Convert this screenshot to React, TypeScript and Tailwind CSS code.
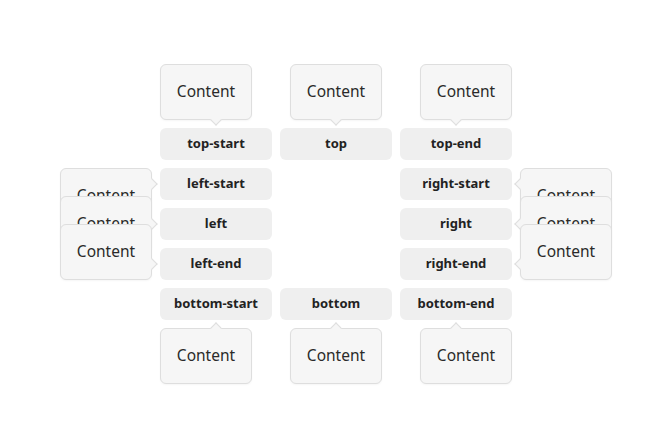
import React from "react";

type Side = "top" | "bottom" | "left" | "right";
type Align = "start" | "center" | "end";

interface Item {
  label: string;
  side: Side;
  align: Align;
}

const popoverPos: Record<string, string> = {
  "top-start": "bottom-[calc(100%+8px)] left-0",
  "top-center": "bottom-[calc(100%+8px)] left-1/2 -translate-x-1/2",
  "top-end": "bottom-[calc(100%+8px)] right-0",
  "bottom-start": "top-[calc(100%+8px)] left-0",
  "bottom-center": "top-[calc(100%+8px)] left-1/2 -translate-x-1/2",
  "bottom-end": "top-[calc(100%+8px)] right-0",
  "left-start": "right-[calc(100%+8px)] top-0",
  "left-center": "right-[calc(100%+8px)] top-1/2 -translate-y-1/2",
  "left-end": "right-[calc(100%+8px)] bottom-0",
  "right-start": "left-[calc(100%+8px)] top-0",
  "right-center": "left-[calc(100%+8px)] top-1/2 -translate-y-1/2",
  "right-end": "left-[calc(100%+8px)] bottom-0",
};

const arrowPos: Record<Side, string> = {
  top: "top-[-12px] left-[calc(50%-4px)] border-r border-b",
  bottom: "bottom-[-12px] left-[calc(50%-4px)] border-l border-t",
  left: "left-[-12px] top-[calc(50%-4px)] border-t border-r",
  right: "right-[-12px] top-[calc(50%-4px)] border-b border-l",
};

function Trigger({ item }: { item: Item }) {
  return (
    <div className="relative">
      <button className="w-[112px] h-8 pb-0.5 rounded-md bg-[#efefef] text-[13px] font-bold text-[#222] leading-none">
        {item.label}
      </button>
      <div
        className={
          "absolute w-[92px] h-14 pb-px flex items-center justify-center rounded-md border border-[#dedede] bg-[#f6f6f6] shadow-[0_1px_2px_rgba(0,0,0,0.04)] text-[15.5px] text-[#2a2a2a] " +
          popoverPos[`${item.side}-${item.align}`]
        }
      >
        Content
      </div>
      <div
        className={
          "absolute w-2 h-2 rotate-45 bg-[#f6f6f6] border-[#dedede] " +
          arrowPos[item.side]
        }
      />
    </div>
  );
}

const rows: (Item | null)[][] = [
  [
    { label: "top-start", side: "top", align: "start" },
    { label: "top", side: "top", align: "center" },
    { label: "top-end", side: "top", align: "end" },
  ],
  [
    { label: "left-start", side: "left", align: "start" },
    null,
    { label: "right-start", side: "right", align: "start" },
  ],
  [
    { label: "left", side: "left", align: "center" },
    null,
    { label: "right", side: "right", align: "center" },
  ],
  [
    { label: "left-end", side: "left", align: "end" },
    null,
    { label: "right-end", side: "right", align: "end" },
  ],
  [
    { label: "bottom-start", side: "bottom", align: "start" },
    { label: "bottom", side: "bottom", align: "center" },
    { label: "bottom-end", side: "bottom", align: "end" },
  ],
];

export default function App() {
  return (
    <div className="w-full h-[448px] bg-white flex items-center justify-center font-['Noto_Sans',sans-serif]">
      <div className="grid grid-cols-3 gap-2">
        {rows.flat().map((item, i) =>
          item ? <Trigger key={i} item={item} /> : <div key={i} />
        )}
      </div>
    </div>
  );
}
